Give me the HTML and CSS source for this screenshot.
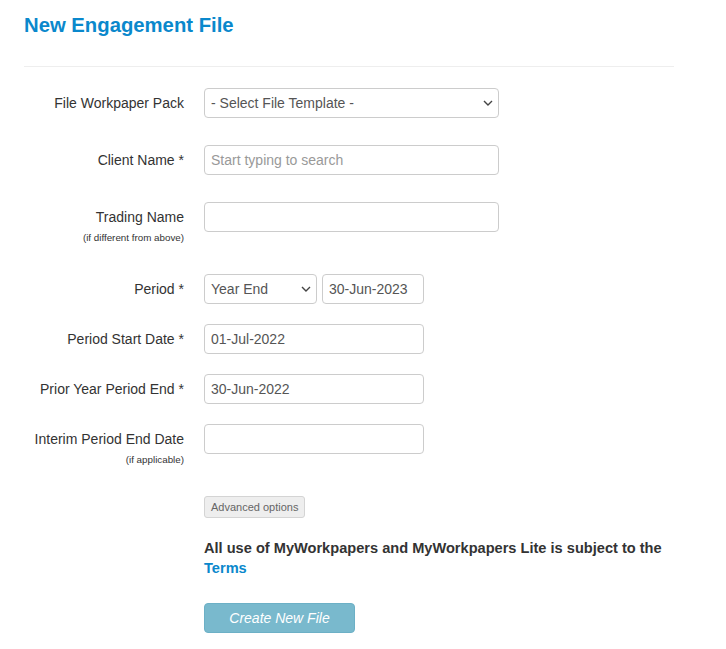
FILE: index.html
```html
<!DOCTYPE html>
<html lang="en">
<head>
    <meta charset="UTF-8">
    <meta name="viewport" content="width=device-width, initial-scale=1.0">
    <title>New Engagement File</title>
    <link rel="stylesheet" href="styles.css">
</head>
<body>
    <div class="page">
        <h1 class="page-title">New Engagement File</h1>
        <hr class="divider">

        <form class="engagement-form">
            <div class="form-row row-wide">
                <div class="label-col"><label>File Workpaper Pack</label></div>
                <div class="field-col">
                    <select class="field field-long">
                        <option>- Select File Template -</option>
                    </select>
                </div>
            </div>

            <div class="form-row row-wide">
                <div class="label-col"><label>Client Name *</label></div>
                <div class="field-col">
                    <input type="text" class="field field-long" placeholder="Start typing to search">
                </div>
            </div>

            <div class="form-row row-trading">
                <div class="label-col">
                    <label>Trading Name</label>
                    <span class="hint">(if different from above)</span>
                </div>
                <div class="field-col">
                    <input type="text" class="field field-long">
                </div>
            </div>

            <div class="form-row">
                <div class="label-col"><label>Period *</label></div>
                <div class="field-col period-fields">
                    <select class="field field-period">
                        <option>Year End</option>
                    </select>
                    <input type="text" class="field field-date" value="30-Jun-2023">
                </div>
            </div>

            <div class="form-row">
                <div class="label-col"><label>Period Start Date *</label></div>
                <div class="field-col">
                    <input type="text" class="field field-mid" value="01-Jul-2022">
                </div>
            </div>

            <div class="form-row">
                <div class="label-col"><label>Prior Year Period End *</label></div>
                <div class="field-col">
                    <input type="text" class="field field-mid" value="30-Jun-2022">
                </div>
            </div>

            <div class="form-row row-last">
                <div class="label-col">
                    <label>Interim Period End Date</label>
                    <span class="hint">(if applicable)</span>
                </div>
                <div class="field-col">
                    <input type="text" class="field field-mid">
                </div>
            </div>

            <div class="form-actions">
                <button type="button" class="btn-advanced">Advanced options</button>
                <p class="terms">All use of MyWorkpapers and MyWorkpapers Lite is subject to the <a href="#">Terms</a></p>
                <button type="submit" class="btn-create" disabled>Create New File</button>
            </div>
        </form>
    </div>
</body>
</html>
```

FILE: styles.css
```css
body {
    margin: 0;
    font-family: "Liberation Sans", Arial, sans-serif;
    font-size: 14px;
    color: #333;
    background: #fff;
}
.page {
    width: 650px;
    padding: 13px 0 0 24px;
}
.page-title {
    margin: 0;
    font-size: 20.3px;
    line-height: 24px;
    font-weight: bold;
    color: #0a88cc;
}
.divider {
    border: 0;
    border-top: 1px solid #eee;
    margin: 29px 0 21px;
}
.form-row {
    display: flex;
    gap: 20px;
    margin-bottom: 20px;
}
.row-wide {
    margin-bottom: 27px;
}
.row-trading {
    margin-bottom: 30px;
}
.row-last {
    margin-bottom: 30px;
}
.label-col {
    width: 160px;
    display: flex;
    flex-direction: column;
    align-items: flex-end;
    text-align: right;
}
.label-col label {
    line-height: 30px;
}
.hint {
    font-size: 9.8px;
    line-height: 12px;
    color: #333;
}
.field-col {
    display: flex;
    gap: 5px;
}
.field {
    box-sizing: border-box;
    height: 30px;
    padding: 4px 6px;
    border: 1px solid #ccc;
    border-radius: 4px;
    font-family: inherit;
    font-size: 14px;
    color: #555;
    background: #fff;
}
.field::placeholder {
    color: #999;
}
select.field {
    appearance: none;
    -webkit-appearance: none;
    background-image: url("data:image/svg+xml,%3Csvg xmlns='http://www.w3.org/2000/svg' width='10' height='6' viewBox='0 0 10 6'%3E%3Cpath d='M1 1l4 4 4-4' fill='none' stroke='%23444' stroke-width='1.4'/%3E%3C/svg%3E");
    background-repeat: no-repeat;
    background-position: right 5px center;
}
.field-long {
    width: 295px;
}
.field-period {
    width: 113px;
}
.field-date {
    width: 102px;
}
.field-mid {
    width: 220px;
}
.form-actions {
    margin-left: 180px;
}
.btn-advanced {
    display: block;
    height: 22px;
    padding: 0 6px;
    font-family: inherit;
    font-size: 11px;
    color: #666;
    background: #eee;
    border: 1px solid #d4d4d4;
    border-radius: 3px;
}
.terms {
    margin: 20px 0 25px;
    font-size: 14.6px;
    line-height: 20px;
    font-weight: bold;
    color: #333;
}
.terms a {
    color: #0a88cc;
    text-decoration: none;
}
.btn-create {
    width: 151px;
    height: 30px;
    font-family: inherit;
    font-size: 14px;
    font-style: italic;
    color: #fff;
    background: #79b9cd;
    border: 1px solid #6cb0c6;
    border-radius: 4px;
}
```
